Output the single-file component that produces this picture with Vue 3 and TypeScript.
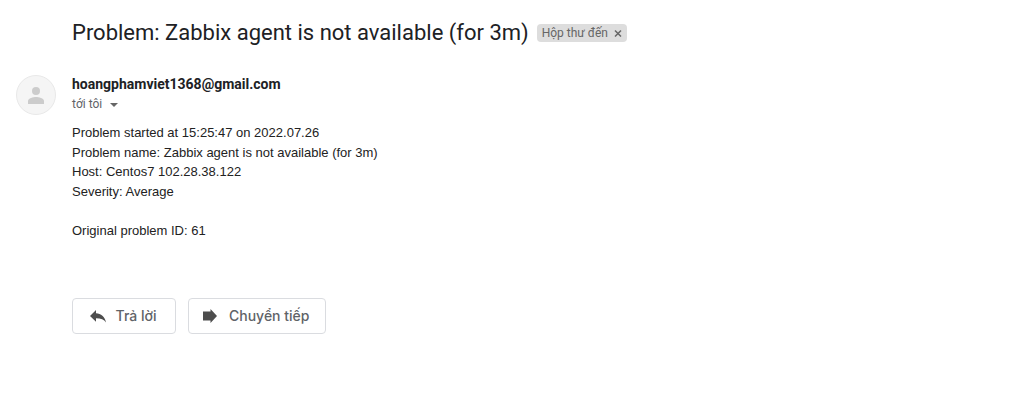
<script setup lang="ts">
import { ref } from 'vue'

const subject = 'Problem: Zabbix agent is not available (for 3m)'
const sender = 'hoangphamviet1368@gmail.com'
const details: string[] = [
  'Problem started at 15:25:47 on 2022.07.26',
  'Problem name: Zabbix agent is not available (for 3m)',
  'Host: Centos7 102.28.38.122',
  'Severity: Average',
  '',
  'Original problem ID: 61',
]
const inInbox = ref(true)
</script>

<template>
  <main class="mail">
    <header class="subject-row">
      <h1 class="subject">{{ subject }}</h1>
      <span v-if="inInbox" class="label">
        Hộp thư đến
        <button class="label-remove" type="button" aria-label="Xóa nhãn Hộp thư đến" @click="inInbox = false">
          <svg viewBox="0 0 8 8" width="8" height="8" aria-hidden="true">
            <path d="M1 1.500l6 6M7 1.500l-6 6" stroke="#666" stroke-width="1.5" fill="none" />
          </svg>
        </button>
      </span>
    </header>

    <article class="message">
      <svg class="avatar" viewBox="0 0 40 40" width="40" height="40" aria-hidden="true">
        <circle cx="20" cy="20" r="19.5" fill="#f5f5f5" stroke="#e8e8e8" />
        <circle cx="20" cy="16" r="4" fill="#ccc" />
        <path d="M12 29v-3c0-2.700 5.300-4 8-4s8 1.300 8 4v3z" fill="#ccc" />
      </svg>
      <div class="content">
        <h2 class="sender">{{ sender }}</h2>
        <button class="recipient" type="button">
          tới tôi
          <svg viewBox="0 0 8 4" width="8" height="4" aria-hidden="true">
            <path d="M0 0h8L4 4z" fill="#666" />
          </svg>
        </button>
        <div class="body">
          <p v-for="(line, i) in details" :key="i" class="line">{{ line || '\u00a0' }}</p>
        </div>
        <div class="actions">
          <button class="action" type="button">
            <svg viewBox="0 0 16 16" width="16" height="16" aria-hidden="true">
              <path d="M6 2v3.200c5 .5 8.800 3 10 9.300-2-3-5-4.300-10-4.300v3.600L0 8z" fill="#4d4d4d" />
            </svg>
            Trả lời
          </button>
          <button class="action" type="button">
            <svg viewBox="0 0 16 16" width="16" height="16" aria-hidden="true">
              <path d="M0 3.500h7.500V1L14 8l-6.500 7v-2.500H0z" fill="#4d4d4d" />
            </svg>
            Chuyển tiếp
          </button>
        </div>
      </div>
    </article>
  </main>
</template>

<style>
body {
  margin: 0;
  background: #fff;
}
</style>

<style scoped>
.mail {
  padding: 18px 16px 32px;
  color: #222;
  font-family: Roboto, "Liberation Sans", sans-serif;
}
.subject-row {
  display: flex;
  flex-wrap: wrap;
  align-items: center;
  gap: 8px;
  padding-left: 56px;
}
.subject {
  margin: 0;
  font: 400 22px/30px Roboto, sans-serif;
  color: #202124;
}
.label {
  display: inline-flex;
  align-items: center;
  gap: 6px;
  height: 18px;
  padding: 0 5px;
  border-radius: 4px;
  background: #ddd;
  color: #666;
  font-size: 12px;
  line-height: 18px;
}
.label-remove {
  display: flex;
  padding: 0;
  border: 0;
  background: none;
  cursor: pointer;
}
.message {
  display: flex;
  gap: 16px;
  margin-top: 27px;
}
.avatar {
  flex: none;
}
.content {
  flex: 1;
  min-width: 0;
}
.sender {
  margin: 0;
  color: #202124;
  font-size: 14px;
  font-weight: 700;
  line-height: 19px;
}
.recipient {
  display: flex;
  align-items: center;
  gap: 8px;
  padding: 0;
  border: 0;
  background: none;
  color: #5f6368;
  font: 12px/21px Roboto, sans-serif;
  cursor: pointer;
}
.body {
  margin-top: 8px;
  font: 13px/1.5 "Liberation Sans", Arial, sans-serif;
}
.line {
  margin: 0;
}
.actions {
  display: flex;
  flex-wrap: wrap;
  gap: 12px;
  margin-top: 58px;
}
.action {
  display: flex;
  align-items: center;
  justify-content: center;
  gap: 10px;
  min-width: 104px;
  height: 36px;
  padding: 0 16px 0 14px;
  border: 1px solid #dadce0;
  border-radius: 4px;
  background: #fff;
  color: #5f6368;
  font: 500 14px/20px Inter, sans-serif;
  cursor: pointer;
}
</style>
